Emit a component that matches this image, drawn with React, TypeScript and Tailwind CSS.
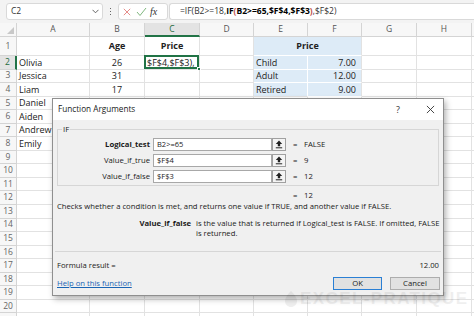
import React from "react";

const W = [
  "w-[73px]",
  "w-[55px]",
  "w-[55px]",
  "w-[54px]",
  "w-[54px]",
  "w-[54px]",
  "w-[55px]",
  "w-[55px]",
];
const LETTERS = ["A", "B", "C", "D", "E", "F", "G", "H"];

const names: Record<number, string> = {
  2: "Olivia",
  3: "Jessica",
  4: "Liam",
  5: "Daniel",
  6: "Aiden",
  7: "Andrew",
  8: "Emily",
};
const ages: Record<number, string> = { 2: "26", 3: "31", 4: "17" };
const prices: Record<number, [string, string]> = {
  2: ["Child", "7.00"],
  3: ["Adult", "12.00"],
  4: ["Retired", "9.00"],
};

function XIcon({ color, size }: { color: string; size: number }) {
  return (
    <svg width={size} height={size} viewBox="0 0 10 10">
      <path d="M1 1 L9 9 M9 1 L1 9" stroke={color} strokeWidth="1" fill="none" />
    </svg>
  );
}

function CheckIcon() {
  return (
    <svg width="11" height="10" viewBox="0 0 11 10">
      <path d="M1 5 L4 8.5 L10 1" stroke="#7fb77e" strokeWidth="1" fill="none" />
    </svg>
  );
}

function ArrowBtn() {
  return (
    <div className="flex h-[13px] w-[14px] shrink-0 items-center justify-center border border-[#a0a0a0] bg-[#f4f4f4]">
      <svg width="8" height="9" viewBox="0 0 8 9">
        <path d="M4 0.5 L0.8 4 H2.8 V6.2 H5.2 V4 H7.2 Z" fill="#222" />
        <path d="M0.8 7.8 H7.2" stroke="#222" strokeWidth="1" />
      </svg>
    </div>
  );
}

function TopBar() {
  return (
    <div className="flex h-[23px] items-center bg-[#f3f3f3] pl-[6px]">
      <div className="flex h-[17px] w-[97px] shrink-0 items-center justify-between rounded-[3px] border border-[#d9d9d9] bg-white pl-[4px] pr-[3px] text-[8.5px] text-[#333]">
        <span>C2</span>
        <svg width="7" height="5" viewBox="0 0 7 5">
          <path d="M0.5 0.8 L3.5 3.8 L6.5 0.8" stroke="#555" strokeWidth="0.9" fill="none" />
        </svg>
      </div>
      <div className="flex w-[15px] shrink-0 flex-col items-center justify-center gap-[1.5px]">
        <span className="h-[1.5px] w-[1.5px] bg-[#666]" />
        <span className="h-[1.5px] w-[1.5px] bg-[#666]" />
        <span className="h-[1.5px] w-[1.5px] bg-[#666]" />
      </div>
      <div className="flex h-[17px] w-[50px] shrink-0 items-center rounded-[3px] border border-[#d9d9d9] bg-white">
        <span className="ml-[3px] flex w-[9px] justify-center">
          <XIcon color="#e0706c" size={8} />
        </span>
        <span className="ml-[5px] flex w-[11px] justify-center">
          <CheckIcon />
        </span>
        <span className="ml-[3px] font-['Liberation_Serif',serif] text-[10px] italic text-[#333]">
          fx
        </span>
      </div>
      <div className="ml-[1px] flex h-[17px] flex-1 items-center whitespace-nowrap rounded-l-[3px] border border-r-0 border-[#d9d9d9] bg-white pl-[10px] text-[8.5px] text-[#333]">
        <span>=IF(B2&gt;=18,</span>
        <span className="font-bold text-black">IF</span>
        <span className="font-bold text-[#c0504d]">(</span>
        <span className="font-bold text-black">B2&gt;=65,$F$4,$F$3</span>
        <span className="font-bold text-[#c0504d]">)</span>
        <span>,$F$2)</span>
      </div>
    </div>
  );
}

function HeaderRow() {
  return (
    <div className="flex h-[14px] text-[8.5px] text-[#555]">
      <div className="flex w-[17px] shrink-0 items-end justify-end border-b border-r border-[#d4d4d4] bg-[#f7f7f7] pb-[2px] pr-[2px]">
        <svg width="7" height="7" viewBox="0 0 7 7">
          <path d="M7 0 L7 7 L0 7 Z" fill="#c8c8c8" />
        </svg>
      </div>
      {LETTERS.map((l, i) => (
        <div
          key={l}
          className={`${W[i]} flex shrink-0 items-center justify-center border-r ${
            l === "C"
              ? "border-b-2 border-b-[#217346] border-r-[#d4d4d4] bg-[#e3e3e3] text-[#1e6b40]"
              : "border-b border-[#d4d4d4] bg-[#f7f7f7]"
          }`}
        >
          {l}
        </div>
      ))}
      <div className="flex-1 border-b border-[#d4d4d4] bg-[#f7f7f7]" />
    </div>
  );
}

function Row({ r }: { r: number }) {
  const h = r === 1 ? "h-[19px]" : "h-[13.55px]";
  const grid = "border-b border-r border-[#e2e2e2]";
  const blueRow = r >= 1 && r <= 4;
  return (
    <div className={`flex ${h} shrink-0 text-[9px] text-[#222]`}>
      <div
        className={`flex w-[17px] shrink-0 items-center justify-center border-b border-[#d4d4d4] text-[8.5px] ${
          r === 2
            ? "border-r-2 border-r-[#217346] bg-[#e3e3e3] text-[#1e6b40]"
            : "border-r bg-[#f7f7f7] text-[#666]"
        }`}
      >
        {r <= 20 ? r : ""}
      </div>
      <div className={`${W[0]} flex shrink-0 items-center px-[2px] ${grid}`}>{names[r] ?? ""}</div>
      <div className={`${W[1]} flex shrink-0 items-center justify-center ${grid} ${r === 1 ? "font-bold" : ""}`}>
        {r === 1 ? "Age" : ages[r] ?? ""}
      </div>
      <div className={`${W[2]} relative flex shrink-0 items-center ${grid} ${r === 1 ? "justify-center font-bold" : "px-[2px]"}`}>
        {r === 1 ? "Price" : r === 2 ? "$F$4,$F$3)," : ""}
        {r === 2 && (
          <>
            <div className="pointer-events-none absolute -left-[1px] -top-[1px] bottom-0 right-0 border-2 border-[#217346]" />
            <div className="absolute -bottom-[2px] -right-[2px] h-[4px] w-[4px] border border-white bg-[#217346]" />
          </>
        )}
      </div>
      <div className={`${W[3]} shrink-0 ${grid}`} />
      {r === 1 ? (
        <div className="flex w-[108px] shrink-0 items-center justify-center border-b border-r border-b-white border-r-[#e2e2e2] bg-[#ddebf7] font-bold">
          Price
        </div>
      ) : blueRow ? (
        <>
          <div className={`${W[4]} flex shrink-0 items-center border-b border-r border-white bg-[#ddebf7] px-[2px] ${r === 4 ? "border-b-[#e2e2e2]" : ""}`}>
            {prices[r][0]}
          </div>
          <div className={`${W[5]} flex shrink-0 items-center justify-end border-b border-r border-b-white border-r-[#e2e2e2] bg-[#ddebf7] pr-[5px] ${r === 4 ? "border-b-[#e2e2e2]" : ""}`}>
            {prices[r][1]}
          </div>
        </>
      ) : (
        <>
          <div className={`${W[4]} shrink-0 ${grid}`} />
          <div className={`${W[5]} shrink-0 ${grid}`} />
        </>
      )}
      <div className={`${W[6]} shrink-0 ${grid}`} />
      <div className={`${W[7]} shrink-0 ${grid}`} />
      <div className="flex-1 border-b border-[#e2e2e2]" />
    </div>
  );
}

function ArgRow({ label, bold, value, result }: { label: string; bold?: boolean; value: string; result: string }) {
  return (
    <div className="flex h-[13px] items-center">
      <div className={`w-[92px] shrink-0 text-right ${bold ? "font-bold" : ""}`}>{label}</div>
      <div className="ml-[3px] flex h-[13px] w-[119px] shrink-0 items-center border border-[#a8a8a8] bg-white pl-[3px] text-[7.5px]">
        {value}
      </div>
      <ArrowBtn />
      <span className="ml-[7px] w-[11px]">=</span>
      <span>{result}</span>
    </div>
  );
}

function Dialog() {
  return (
    <div className="absolute left-[52px] top-[98px] flex h-[198px] w-[392px] flex-col border border-[#8f8f8f] bg-[#f0f0f0] text-[7.7px] text-[#1a1a1a] shadow-[2px_3px_6px_rgba(0,0,0,0.3)]">
      <div className="flex h-[21px] shrink-0 items-center bg-white pl-[5px] text-[8.2px]">
        <span className="flex-1">Function Arguments</span>
        <span className="w-[29px] text-[9px] text-[#333]">?</span>
        <span className="mr-[8px] flex w-[10px] justify-center">
          <XIcon color="#333" size={9} />
        </span>
      </div>
      <div className="flex flex-col px-[4px]">
        <fieldset className="mt-[4px] border border-[#d6d6d6] pb-[2px]">
          <legend className="ml-[4px] px-[1px] leading-[10px]">IF</legend>
          <div className="mt-[4px] flex flex-col gap-[3px]">
            <ArgRow label="Logical_test" bold value="B2>=65" result="FALSE" />
            <ArgRow label="Value_if_true" value="$F$4" result="9" />
            <ArgRow label="Value_if_false" value="$F$3" result="12" />
          </div>
        </fieldset>
        <div className="mt-[4px] flex h-[11px] items-center pl-[236px]">
          <span className="w-[11px]">=</span>
          <span>12</span>
        </div>
        <div className="h-[11px] leading-[11px] whitespace-nowrap">
          Checks whether a condition is met, and returns one value if TRUE, and another value if FALSE.
        </div>
        <div className="mt-[6px] flex leading-[10px]">
          <div className="w-[134px] shrink-0 text-right font-bold">Value_if_false</div>
          <div className="ml-[5px] whitespace-nowrap">
            is the value that is returned if Logical_test is FALSE. If omitted, FALSE
            <br />
            is returned.
          </div>
        </div>
        <div className="-mx-[2px] mt-[13px] border-t border-[#d6d6d6]" />
        <div className="mt-[9px] flex h-[10px] items-center justify-between">
          <span>Formula result =</span>
          <span>12.00</span>
        </div>
        <div className="mt-[6px] flex h-[13px] items-center">
          <span className="flex-1 text-[#1a64b4] underline">Help on this function</span>
          <div className="-mr-[1px] flex gap-[8px]">
            <div className="flex h-[13px] w-[49px] items-center justify-center border border-[#2a7fd4] bg-[#e1e1e1]">
              OK
            </div>
            <div className="flex h-[13px] w-[50px] items-center justify-center border border-[#adadad] bg-[#e1e1e1]">
              Cancel
            </div>
          </div>
        </div>
      </div>
    </div>
  );
}

function Watermark() {
  return (
    <div className="pointer-events-none absolute left-[284px] top-[290px] flex items-center gap-[2px] whitespace-nowrap opacity-[0.06]">
      <svg width="14" height="16" viewBox="0 0 14 16">
        <path d="M7 0 C3 4 1 7 1 10 C1 13.5 4 16 7 16 C10 16 13 13.5 13 10 C13 7 11 4 7 0 Z" fill="#000" />
      </svg>
      <span className="font-['Liberation_Sans',sans-serif] text-[17px] font-bold leading-[17px] tracking-[1.4px] text-black">
        EXCEL-PRATIQUE
      </span>
    </div>
  );
}

export default function App() {
  return (
    <div className="relative h-[316px] w-[474px] overflow-hidden bg-white font-['Open_Sans',sans-serif]">
      <TopBar />
      <HeaderRow />
      {Array.from({ length: 21 }, (_, i) => (
        <Row key={i} r={i + 1} />
      ))}
      <Dialog />
      <Watermark />
    </div>
  );
}
